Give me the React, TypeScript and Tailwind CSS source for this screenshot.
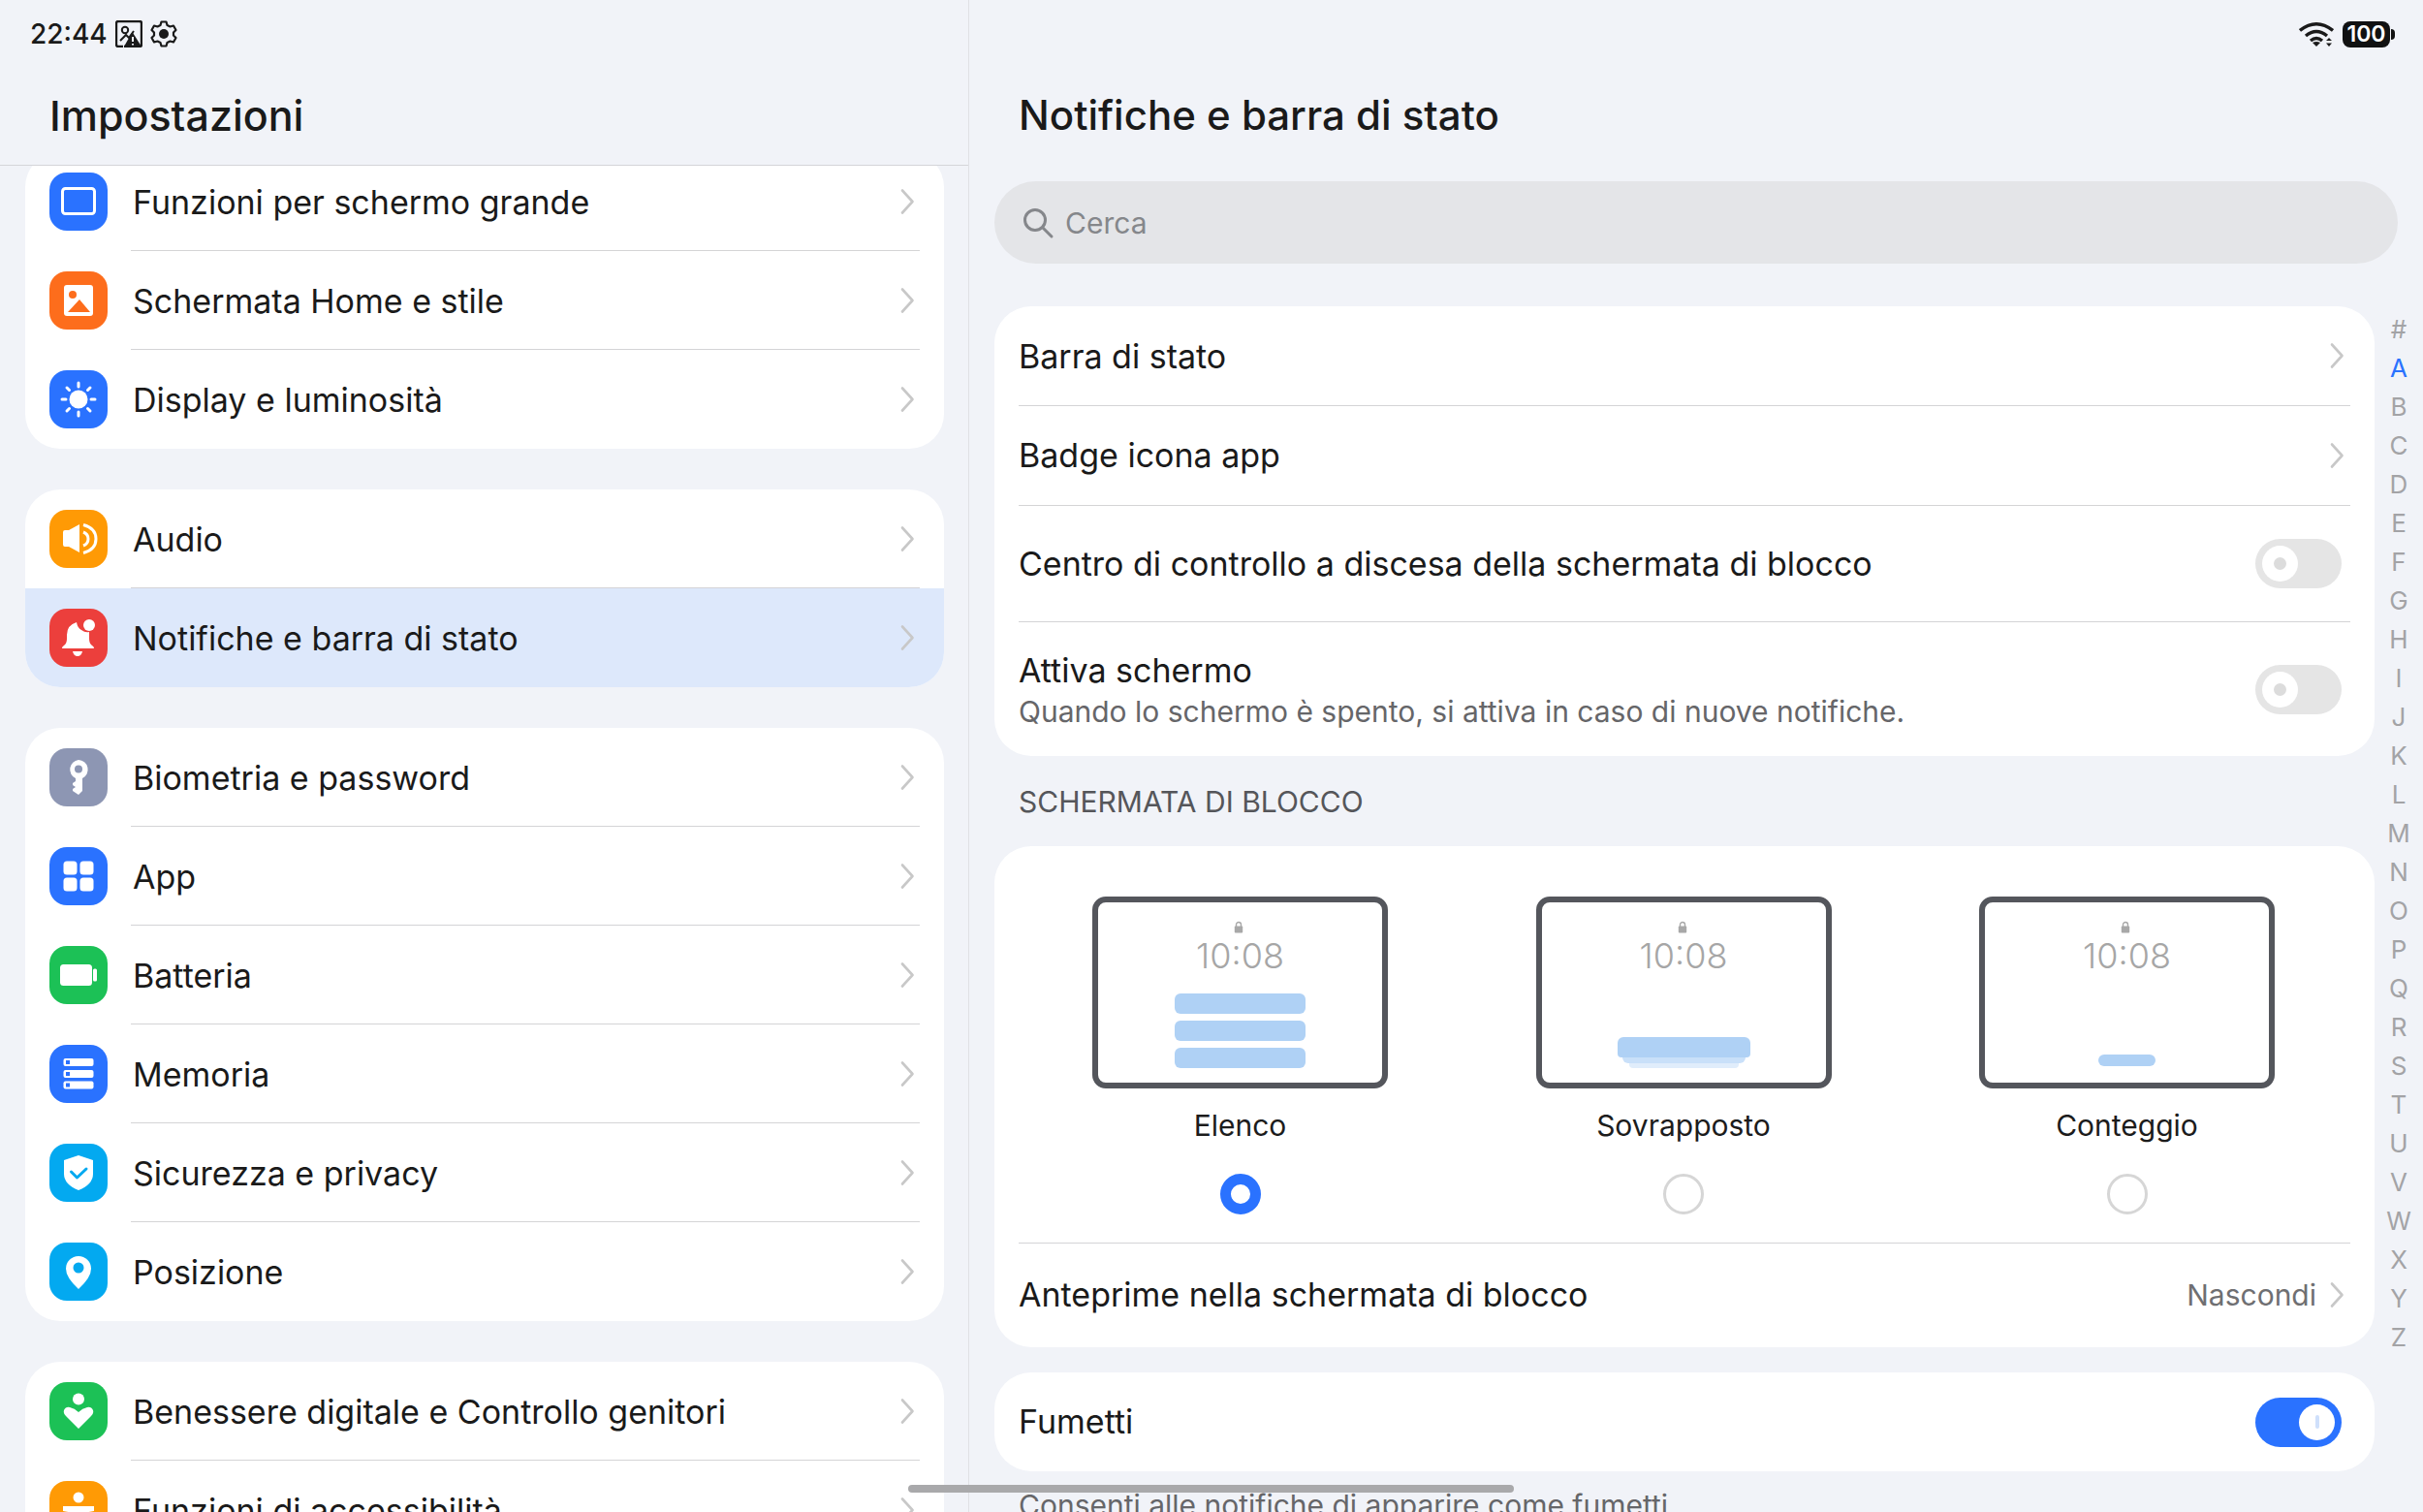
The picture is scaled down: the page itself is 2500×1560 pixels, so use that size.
import type { ReactNode } from "react";

const FONT = "font-['Inter','Noto_Sans',sans-serif]";

function Chevron() {
  return (
    <svg width="15" height="28" viewBox="0 0 15 28" fill="none" className="shrink-0">
      <path d="M2 2.5 L12.5 14 L2 25.5" stroke="#c8c8c8" strokeWidth="2.6" strokeLinecap="round" strokeLinejoin="round" />
    </svg>
  );
}

function IconBox({ bg, children }: { bg: string; children: ReactNode }) {
  return (
    <div className={`w-[60px] h-[60px] rounded-[18px] shrink-0 ${bg}`}>
      <svg width="60" height="60" viewBox="0 0 60 60">
        {children}
      </svg>
    </div>
  );
}

const icons: Record<string, ReactNode> = {
  screen: (
    <IconBox bg="bg-[#2a72ff]">
      <rect x="13.5" y="16.5" width="33" height="26" rx="3" fill="none" stroke="#fff" strokeWidth="3" />
    </IconBox>
  ),
  home: (
    <IconBox bg="bg-[#fd6d1c]">
      <rect x="15" y="14" width="30" height="32" rx="3" fill="#fff" />
      <circle cx="24" cy="24" r="4" fill="#fd6d1c" />
      <path d="M19 42 L31 29 L42 42 Z" fill="#fd6d1c" />
    </IconBox>
  ),
  display: (
    <IconBox bg="bg-[#2a72ff]">
      <circle cx="30" cy="30" r="9.5" fill="#fff" />
      <g stroke="#fff" strokeWidth="3" strokeLinecap="round">
        <path d="M30 13 V17 M30 43 V47 M13 30 H17 M43 30 H47 M18 18 L20.5 20.5 M39.5 39.5 L42 42 M42 18 L39.5 20.5 M20.5 39.5 L18 42" />
      </g>
    </IconBox>
  ),
  audio: (
    <IconBox bg="bg-[#ff9a05]">
      <path d="M14 23 Q14 21 16 21 H20 L31 15 V44 L20 38 H16 Q14 38 14 36 Z" fill="#fff" />
      <path d="M35 15.5 Q48 19 48 30 Q48 41 35 44.5 M35 23 Q40 25 40 30 Q40 35 35 37" fill="none" stroke="#fff" strokeWidth="3" />
    </IconBox>
  ),
  bell: (
    <IconBox bg="bg-[#ec3f3c]">
      <path d="M13 41 Q13 39 15 38 Q18 36 18 31 V27 Q18 17 28 14 Q29 20 33 22 Q37 25 41 24 V31 Q41 36 44 38 Q46 39 46 41 Z" fill="#fff" />
      <path d="M24 44 H34 Q33 49 29 49 Q25 49 24 44 Z" fill="#fff" />
      <circle cx="41" cy="17" r="6" fill="#fff" />
    </IconBox>
  ),
  key: (
    <IconBox bg="bg-[#8d96b3]">
      <path d="M30 12 A10 10 0 0 1 34 31 V44 L30 48 L24 44 V42 L27 40 L24 38 V36 L27 34 V31 A10 10 0 0 1 30 12 Z" fill="#fff" />
      <circle cx="30" cy="21.5" r="4" fill="#8d96b3" />
    </IconBox>
  ),
  apps: (
    <IconBox bg="bg-[#2a72ff]">
      <rect x="14.5" y="14.5" width="14" height="14" rx="3.5" fill="#fff" />
      <rect x="31.5" y="14.5" width="14" height="14" rx="3.5" fill="#fff" />
      <rect x="14.5" y="31.5" width="14" height="14" rx="3.5" fill="#fff" />
      <rect x="31.5" y="31.5" width="14" height="14" rx="3.5" fill="#fff" />
    </IconBox>
  ),
  battery: (
    <IconBox bg="bg-[#1cc156]">
      <rect x="11" y="19" width="33" height="22" rx="3.5" fill="#fff" />
      <rect x="45" y="23.5" width="4" height="13" rx="1.5" fill="#fff" />
    </IconBox>
  ),
  memory: (
    <IconBox bg="bg-[#2a72ff]">
      {[14, 26, 37.5].map((y) => (
        <g key={y}>
          <rect x="14.5" y={y} width="31" height="8" rx="2" fill="#fff" />
          <rect x="17" y={y + 2} width="4" height="4" fill="#2a72ff" />
        </g>
      ))}
    </IconBox>
  ),
  shield: (
    <IconBox bg="bg-[#03a9f0]">
      <path d="M30 12 L45 17 V31 Q45 42 30 48 Q15 42 15 31 V17 Z" fill="#fff" />
      <path d="M22.5 29 L28.5 35 L38 26" fill="none" stroke="#03a9f0" strokeWidth="3" strokeLinecap="round" strokeLinejoin="round" />
    </IconBox>
  ),
  pin: (
    <IconBox bg="bg-[#03a9f0]">
      <path d="M30 48 Q17 36 17 27 A13 13 0 0 1 43 27 Q43 36 30 48 Z" fill="#fff" />
      <circle cx="30" cy="26" r="5.5" fill="#03a9f0" />
    </IconBox>
  ),
  wellbeing: (
    <IconBox bg="bg-[#1cc156]">
      <circle cx="30" cy="17.5" r="6" fill="#fff" />
      <path d="M30 48 L17 35 Q14 32 15 29 Q17 25 21 26 Q26 27 30 31 Q34 27 39 26 Q43 25 45 29 Q46 32 43 35 Z" fill="#fff" />
    </IconBox>
  ),
  access: (
    <IconBox bg="bg-[#ff9a05]">
      <circle cx="30" cy="17" r="5.5" fill="#fff" />
      <path d="M14 26 H46 V31 L35 33 V44 H25 V33 L14 31 Z" fill="#fff" />
    </IconBox>
  ),
};

const groups = [
  [
    { icon: "screen", label: "Funzioni per schermo grande" },
    { icon: "home", label: "Schermata Home e stile" },
    { icon: "display", label: "Display e luminosità" },
  ],
  [
    { icon: "audio", label: "Audio" },
    { icon: "bell", label: "Notifiche e barra di stato", active: true },
  ],
  [
    { icon: "key", label: "Biometria e password" },
    { icon: "apps", label: "App" },
    { icon: "battery", label: "Batteria" },
    { icon: "memory", label: "Memoria" },
    { icon: "shield", label: "Sicurezza e privacy" },
    { icon: "pin", label: "Posizione" },
  ],
  [
    { icon: "wellbeing", label: "Benessere digitale e Controllo genitori" },
    { icon: "access", label: "Funzioni di accessibilità" },
  ],
];

const letters = "#ABCDEFGHIJKLMNOPQRSTUVWXYZ".split("");

function Toggle({ on = false }: { on?: boolean }) {
  return (
    <div
      className={`w-[89px] h-[51px] rounded-full flex items-center px-[7px] shrink-0 mr-[3px] ${
        on ? "bg-[#2a72ff] justify-end" : "bg-[#e5e5e5] justify-start"
      }`}
    >
      <div className="w-[37px] h-[37px] rounded-full bg-white flex items-center justify-center">
        {on ? (
          <div className="w-[4px] h-[14px] rounded-full bg-[#cfe0fb]" />
        ) : (
          <div className="w-[13px] h-[13px] rounded-full bg-[#dcdcdc]" />
        )}
      </div>
    </div>
  );
}

function Row({ className, border = true, children }: { className: string; border?: boolean; children: ReactNode }) {
  return (
    <div className={`flex items-center ${border ? "border-b border-[#d4d4d6]" : ""} ${className}`}>
      {children}
    </div>
  );
}

function LockPreview({ children }: { children: ReactNode }) {
  return (
    <div className="w-[305px] h-[198px] rounded-[14px] border-[6px] border-[#54565c] bg-white flex flex-col items-center relative">
      <svg width="10" height="13" viewBox="0 0 10 13" className="mt-[19px] mr-[3px]">
        <path d="M2.5 6 V4 A2.5 2.5 0 0 1 7.5 4 V6" fill="none" stroke="#a8a8a8" strokeWidth="1.4" />
        <rect x="0.8" y="5.5" width="8.4" height="7" rx="1" fill="#a8a8a8" />
      </svg>
      <div className="text-[36px] leading-[44px] mt-[1px] text-[#a6a6a6] font-light">10:08</div>
      {children}
    </div>
  );
}

function Choice({ label, selected = false, children }: { label: string; selected?: boolean; children: ReactNode }) {
  return (
    <div className="flex flex-col items-center w-[305px]">
      <LockPreview>{children}</LockPreview>
      <div className="text-[30px] leading-[40px] mt-[18px] text-[#1c1c1c]">{label}</div>
      {selected ? (
        <div className="w-[42px] h-[42px] mt-[30px] rounded-full border-[11px] border-[#2a72ff]" />
      ) : (
        <div className="w-[42px] h-[42px] mt-[30px] rounded-full border-[3px] border-[#d6d6d6]" />
      )}
    </div>
  );
}

export default function App() {
  return (
    <div className={`relative w-[2500px] h-[1560px] overflow-hidden flex bg-[#f1f3f8] text-[#1a1a1a] ${FONT}`}>
      {/* Left pane */}
      <div className="w-[1000px] h-full flex flex-col border-r border-[#e0e1e5] shrink-0">
        <div className="h-[70px] flex items-center pl-[31px] shrink-0">
          <span className="text-[28px] font-medium leading-none">22:44</span>
          <svg width="28" height="28" viewBox="0 0 28 28" className="ml-[8px]">
            <path d="M8 27 H3 Q1 27 1 25 V3 Q1 1 3 1 H25 Q27 1 27 3 V25 Q27 27 25 27 H9" fill="none" stroke="#1a1a1a" strokeWidth="2.4" />
            <circle cx="10" cy="10" r="3.2" fill="none" stroke="#1a1a1a" strokeWidth="2" />
            <path d="M5 21 L11 15 L14 18 L19 11" fill="none" stroke="#1a1a1a" strokeWidth="2" />
            <path d="M17.5 12 L27 27 H9 Z" fill="#1a1a1a" />
            <path d="M18 17 V22 M18 24 V25.5" stroke="#f1f3f8" strokeWidth="2" />
          </svg>
          <svg width="28" height="28" viewBox="0 0 28 28" className="ml-[8px]">
            <path
              d="M11.5 1.5 H16.5 L17.5 5 L20.5 6.5 L24 5.5 L26.5 10 L24 12.5 V15.5 L26.5 18 L24 22.5 L20.5 21.5 L17.5 23 L16.5 26.5 H11.5 L10.5 23 L7.5 21.5 L4 22.5 L1.5 18 L4 15.5 V12.5 L1.5 10 L4 5.5 L7.5 6.5 L10.5 5 Z"
              fill="none"
              stroke="#1a1a1a"
              strokeWidth="2.2"
              strokeLinejoin="round"
            />
            <circle cx="14" cy="14" r="5" fill="#1a1a1a" />
          </svg>
        </div>
        <div className="h-[101px] flex items-center pl-[51px] pb-[2px] border-b border-[#d4d5d9] shrink-0">
          <h1 className="text-[43px] font-medium leading-none">Impostazioni</h1>
        </div>
        <div className="flex-1 min-h-0 overflow-hidden pl-[26px] pr-[25px]">
          <div className="flex flex-col gap-[42px] mt-[-14px]">
            {groups.map((group, i) => (
              <div key={i} className="bg-white rounded-[36px] overflow-hidden">
                {group.map((item, j) => (
                  <div
                    key={item.label}
                    className={`flex items-center h-[102px] pl-[25px] pr-[25px] ${item.active ? "bg-[#dde8fb]" : ""}`}
                  >
                    {icons[item.icon]}
                    <Row className="flex-1 h-full ml-[24px] justify-between pr-[5px]" border={j < group.length - 1}>
                      <span className="text-[34px] ml-[2px] mt-[2px] leading-none">{item.label}</span>
                      <Chevron />
                    </Row>
                  </div>
                ))}
              </div>
            ))}
          </div>
        </div>
      </div>

      {/* Right pane */}
      <div className="flex-1 h-full flex flex-col">
        <div className="h-[70px] flex items-center justify-end pr-[29px] shrink-0">
          <svg width="36" height="26" viewBox="0 0 36 26" className="mr-[9px]">
            <g fill="none" stroke="#1a1a1a" strokeWidth="3.4">
              <path d="M1 9.5 Q18 -4 35 9.5" />
              <path d="M7 15 Q18 6 29 15" />
              <path d="M12 20 Q18 15 24 20" />
            </g>
            <path d="M18 26 L14 22 Q18 20 22 22 Z" fill="#1a1a1a" />
            <path d="M31 17 L34 20 H28 Z M31 26 L28 22.5 H34 Z" fill="#1a1a1a" />
          </svg>
          <div className="relative w-[49px] h-[27px] rounded-[8px] bg-[#111] flex items-center justify-center mr-[5px]">
            <span className="text-[23px] font-semibold text-white leading-none">100</span>
            <div className="absolute right-[-5px] top-[8px] w-[4px] h-[11px] rounded-r-full bg-[#111]" />
          </div>
        </div>
        <div className="h-[98px] flex items-center pl-[51px] shrink-0">
          <h2 className="text-[42px] font-medium leading-none">Notifiche e barra di stato</h2>
        </div>
        <div className="h-[85px] mt-[19px] ml-[26px] mr-[26px] rounded-full bg-[#e4e5e8] flex items-center pl-[28px] shrink-0">
          <svg width="34" height="34" viewBox="0 0 34 34" fill="none">
            <circle cx="14" cy="14" r="10.5" stroke="#85878b" strokeWidth="3" />
            <path d="M22 22 L31 31" stroke="#85878b" strokeWidth="3" strokeLinecap="round" />
          </svg>
          <span className="text-[30px] leading-none text-[#85878b] ml-[11px]">Cerca</span>
        </div>

        <div className="flex flex-1 min-h-0 mt-[44px]">
          <div className="w-[1424px] ml-[26px] shrink-0 flex flex-col">
            <div className="bg-white rounded-[38px] px-[25px] shrink-0">
              <Row className="h-[103px] justify-between pr-[6px]">
                <span className="text-[34px] mt-[2px] leading-none">Barra di stato</span>
                <Chevron />
              </Row>
              <Row className="h-[103px] justify-between pr-[6px]">
                <span className="text-[34px] leading-none">Badge icona app</span>
                <Chevron />
              </Row>
              <Row className="h-[120px] justify-between pr-[6px]">
                <span className="text-[34px] leading-none">Centro di controllo a discesa della schermata di blocco</span>
                <Toggle />
              </Row>
              <Row className="h-[138px] justify-between pr-[6px]" border={false}>
                <div className="flex flex-col pt-[1px]">
                  <span className="text-[34px] leading-[44px]">Attiva schermo</span>
                  <span className="text-[30px] leading-[40px] text-[#666669]">
                    Quando lo schermo è spento, si attiva in caso di nuove notifiche.
                  </span>
                </div>
                <Toggle />
              </Row>
            </div>

            <div className="h-[93px] flex items-center pl-[25px] pt-[1px] shrink-0">
              <span className="text-[30px] leading-none text-[#55565a]">SCHERMATA DI BLOCCO</span>
            </div>

            <div className="bg-white rounded-[38px] px-[25px] pt-[52px] shrink-0">
              <div className="flex pl-[76px] gap-[152.5px] pb-[29px] border-b border-[#d4d4d6]">
                <Choice label="Elenco" selected>
                  <div className="mt-[17px] w-[135px] flex flex-col gap-[7px]">
                    <div className="h-[21px] rounded-[6px] bg-[#afd1f5]" />
                    <div className="h-[21px] rounded-[6px] bg-[#afd1f5]" />
                    <div className="h-[21px] rounded-[6px] bg-[#afd1f5]" />
                  </div>
                </Choice>
                <Choice label="Sovrapposto">
                  <div className="mt-[62px] flex flex-col items-center">
                    <div className="w-[137px] h-[21px] rounded-t-[6px] rounded-b-[4px] bg-[#afd1f5]" />
                    <div className="w-[127px] h-[6px] rounded-b-[6px] bg-[#c9e0f9]" />
                    <div className="w-[113px] h-[5px] rounded-b-[4px] bg-[#e0edfb]" />
                  </div>
                </Choice>
                <Choice label="Conteggio">
                  <div className="mt-[80px] w-[59px] h-[12px] rounded-full bg-[#afd1f5]" />
                </Choice>
              </div>
              <Row className="h-[107px] justify-between pr-[6px] pb-[2px]" border={false}>
                <span className="text-[34px] leading-none">Anteprime nella schermata di blocco</span>
                <div className="flex items-center gap-[14px]">
                  <span className="text-[30px] leading-none text-[#6f6f72]">Nascondi</span>
                  <Chevron />
                </div>
              </Row>
            </div>

            <div className="bg-white rounded-[38px] px-[25px] mt-[26px] shrink-0">
              <Row className="h-[102px] justify-between pr-[6px]" border={false}>
                <span className="text-[34px] leading-none">Fumetti</span>
                <Toggle on />
              </Row>
            </div>
            <div className="pl-[25px] mt-[15px] text-[30px] leading-[40px] text-[#666669] shrink-0">
              Consenti alle notifiche di apparire come fumetti
            </div>
          </div>

          <div className="w-[50px] shrink-0 flex flex-col items-center mt-[4px]">
            {letters.map((l) => (
              <div
                key={l}
                className={`h-[40px] shrink-0 flex items-center text-[26px] leading-none ${
                  l === "A" ? "text-[#2a72ff]" : "text-[#a3a3a6]"
                }`}
              >
                {l}
              </div>
            ))}
          </div>
        </div>
      </div>

      {/* Gesture bar over the content */}
      <div className="absolute left-[937px] top-[1532px] w-[625px] h-[8px] rounded-full bg-[#a9a9ab]" />
    </div>
  );
}
